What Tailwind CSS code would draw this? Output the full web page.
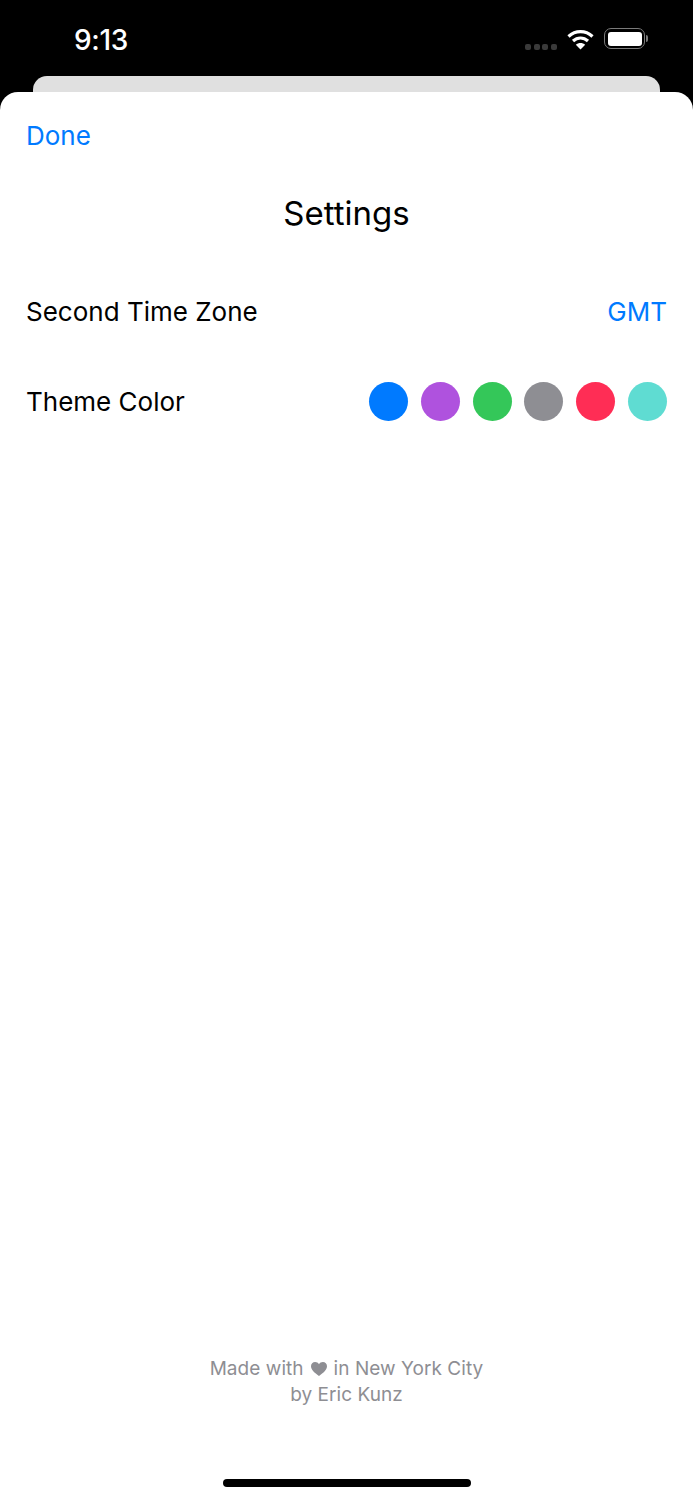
<!DOCTYPE html>
<html lang="en">
<head>
  <meta charset="UTF-8" />
  <meta name="viewport" content="width=device-width, initial-scale=1.0" />
  <title>Settings</title>
  <script src="https://cdn.jsdelivr.net/npm/@tailwindcss/browser@4"></script>
</head>
<body class="bg-black font-['Inter',sans-serif]">
  <div class="flex flex-col w-[693px] h-[1500px] overflow-hidden">
    <!-- Status bar -->
    <div class="h-[76px] flex items-start justify-between pl-[74px] pr-[45px] text-white">
      <div class="mt-[23px] text-[28px] leading-[34px] font-medium tracking-[-0.3px]">9:13</div>
      <div class="flex items-start">
        <div class="flex gap-[2.6px] mt-[44px] mr-[10px]">
          <span class="w-[6px] h-[6px] rounded-[2px] bg-[#3a3a3a]"></span>
          <span class="w-[6px] h-[6px] rounded-[2px] bg-[#3a3a3a]"></span>
          <span class="w-[6px] h-[6px] rounded-[2px] bg-[#3a3a3a]"></span>
          <span class="w-[6px] h-[6px] rounded-[2px] bg-[#3a3a3a]"></span>
        </div>
        <svg class="mt-[29px] mr-[10px]" width="27" height="21" viewBox="0 0 27 21" fill="none">
          <path d="M1.5 7.5C8.5 1 18.5 1 25.5 7.5" stroke="white" stroke-width="3.2" />
          <path d="M6 12C10.5 8 16.5 8 21 12" stroke="white" stroke-width="3.2" />
          <path d="M13.5 20.5L8.8 15.7C11.5 13.4 15.5 13.4 18.2 15.7Z" fill="white" />
        </svg>
        <div class="flex items-center mt-[28px]">
          <div class="w-[41px] h-[21px] rounded-[7px] border-[1.5px] border-[#7a7a7a] p-[2.5px]">
            <div class="w-full h-full rounded-[3px] bg-white"></div>
          </div>
          <div class="w-[2px] h-[7px] ml-[1px] rounded-r-full bg-[#7a7a7a]"></div>
        </div>
      </div>
    </div>
    <!-- Card behind the sheet -->
    <div class="h-[16px] mx-[33px] bg-[#e0e0e0] rounded-t-[14px]"></div>
    <!-- Sheet -->
    <div class="relative flex-1 flex flex-col bg-white rounded-t-[18px] pl-[26px] pr-[26px]">
      <div class="mt-[27px] text-[26px] leading-[34px] text-[#007aff]">Done</div>
      <div class="mt-[40px] text-center text-[33px] leading-[40px] text-black">Settings</div>
      <div class="mt-[62px] flex items-center justify-between h-[34px] text-[26px] leading-[34px]">
        <span class="text-black">Second Time Zone</span>
        <span class="text-[#007aff]">GMT</span>
      </div>
      <div class="mt-[53px] flex items-center justify-between h-[40px] text-[26px] leading-[34px]">
        <span class="text-black">Theme Color</span>
        <div class="flex gap-[12.8px] mb-[2px]">
          <span class="w-[39px] h-[39px] rounded-full bg-[#007aff]"></span>
          <span class="w-[39px] h-[39px] rounded-full bg-[#af52de]"></span>
          <span class="w-[39px] h-[39px] rounded-full bg-[#34c759]"></span>
          <span class="w-[39px] h-[39px] rounded-full bg-[#8e8e93]"></span>
          <span class="w-[39px] h-[39px] rounded-full bg-[#ff2d55]"></span>
          <span class="w-[39px] h-[39px] rounded-full bg-[#5fdcd2]"></span>
        </div>
      </div>
      <!-- Footer -->
      <div class="mt-auto mb-[92px] text-center text-[19px] leading-[26px] tracking-[0.05px] text-[#8e8e93]">
        <div class="flex items-center justify-center">
          <span>Made with</span>
          <svg class="mx-[7px]" width="16" height="14" viewBox="0 0 16 14">
            <path d="M8 14C3.5 10.6 0 7.8 0 4.2 0 1.8 1.8 0 4.1 0 5.7 0 7.2.9 8 2.3 8.8.9 10.3 0 11.9 0 14.2 0 16 1.8 16 4.2 16 7.8 12.5 10.6 8 14Z" fill="#8e8e93" />
          </svg>
          <span>in New York City</span>
        </div>
        <div>by Eric Kunz</div>
      </div>
      <!-- Home indicator -->
      <div class="absolute left-[223px] bottom-[13px] w-[248px] h-[8px] rounded-full bg-black"></div>
    </div>
  </div>
</body>
</html>
